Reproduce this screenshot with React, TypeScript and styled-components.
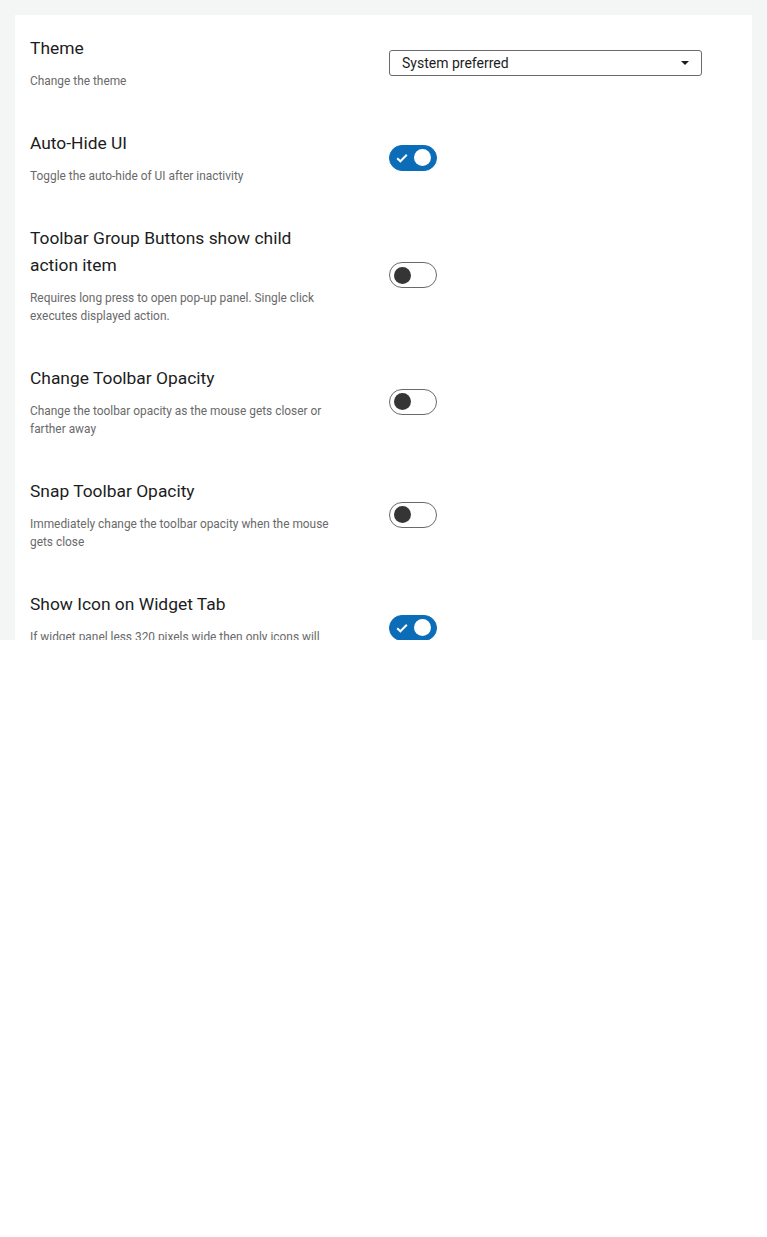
import styled, { createGlobalStyle } from 'styled-components';

const GlobalStyle = createGlobalStyle`
  html, body {
    margin: 0;
    padding: 0;
    background: #ffffff;
  }
  body {
    font-family: Roboto, 'Liberation Sans', sans-serif;
  }
`;

type Setting = {
  title: string;
  description: string;
  control: 'select' | 'on' | 'off';
};

const settings: Setting[] = [
  { title: 'Theme', description: 'Change the theme', control: 'select' },
  { title: 'Auto-Hide UI', description: 'Toggle the auto-hide of UI after inactivity', control: 'on' },
  {
    title: 'Toolbar Group Buttons show child action item',
    description: 'Requires long press to open pop-up panel. Single click executes displayed action.',
    control: 'off',
  },
  {
    title: 'Change Toolbar Opacity',
    description: 'Change the toolbar opacity as the mouse gets closer or farther away',
    control: 'off',
  },
  {
    title: 'Snap Toolbar Opacity',
    description: 'Immediately change the toolbar opacity when the mouse gets close',
    control: 'off',
  },
  {
    title: 'Show Icon on Widget Tab',
    description: 'If widget panel less 320 pixels wide then only icons will be shown on the tabs.',
    control: 'on',
  },
];

const Toggle = ({ checked }: { checked: boolean }) => (
  <ToggleTrack $checked={checked} role="switch" aria-checked={checked}>
    {checked && (
      <CheckMark viewBox="0 0 12 12">
        <path d="M1.2 6.2l3.2 3.1L10.8 2.8" fill="none" stroke="#fff" strokeWidth="2" />
      </CheckMark>
    )}
    <Knob $checked={checked} />
  </ToggleTrack>
);

const App = () => {
  return (
    <>
      <GlobalStyle />
      <Page>
        <Panel>
          {settings.map((s) => (
            <Row key={s.title}>
              <Label>
                <Title>{s.title}</Title>
                <Description>{s.description}</Description>
              </Label>
              <Control>
                {s.control === 'select' ? (
                  <Select>
                    <span>System preferred</span>
                    <Caret />
                  </Select>
                ) : (
                  <Toggle checked={s.control === 'on'} />
                )}
              </Control>
            </Row>
          ))}
        </Panel>
      </Page>
    </>
  );
};

export default App;

const Page = styled.div`
  background: #f4f5f5;
  height: 640px;
  padding: 15px 15px 0;
  box-sizing: border-box;
  overflow: hidden;
`;

const Panel = styled.div`
  background: #ffffff;
  padding: 0 15px;
  min-height: 100%;
`;

const Row = styled.div`
  display: grid;
  grid-template-columns: 300px 313px;
  column-gap: 59px;
  align-items: center;
  padding: 20px 0;
`;

const Label = styled.div`
  display: flex;
  flex-direction: column;
`;

const Title = styled.div`
  font-size: 17.4px;
  line-height: 27px;
  color: #1c1c1c;
  margin-bottom: 10px;
`;

const Description = styled.div`
  font-size: 11.9px;
  line-height: 18px;
  color: #6a6a6a;
`;

const Control = styled.div`
  display: flex;
  align-items: center;
`;

const Select = styled.div`
  width: 313px;
  height: 26px;
  box-sizing: border-box;
  border: 1px solid #6a6a6a;
  border-radius: 3px;
  display: flex;
  align-items: center;
  justify-content: space-between;
  padding: 0 12px;
  font-size: 14px;
  color: #1c1c1c;
`;

const Caret = styled.span`
  width: 0;
  height: 0;
  border-left: 4px solid transparent;
  border-right: 4px solid transparent;
  border-top: 4px solid #1c1c1c;
`;

const ToggleTrack = styled.div<{ $checked: boolean }>`
  position: relative;
  width: 48px;
  height: 26px;
  box-sizing: border-box;
  border-radius: 13px;
  border: 1px solid ${(p) => (p.$checked ? '#0b6cb8' : '#6a6a6a')};
  background: ${(p) => (p.$checked ? '#0b6cb8' : '#ffffff')};
`;

const CheckMark = styled.svg`
  position: absolute;
  left: 6px;
  top: 6px;
  width: 12px;
  height: 12px;
`;

const Knob = styled.span<{ $checked: boolean }>`
  position: absolute;
  top: 3.5px;
  left: ${(p) => (p.$checked ? '24px' : '4px')};
  width: 17px;
  height: 17px;
  border-radius: 50%;
  background: ${(p) => (p.$checked ? '#ffffff' : '#353535')};
`;
